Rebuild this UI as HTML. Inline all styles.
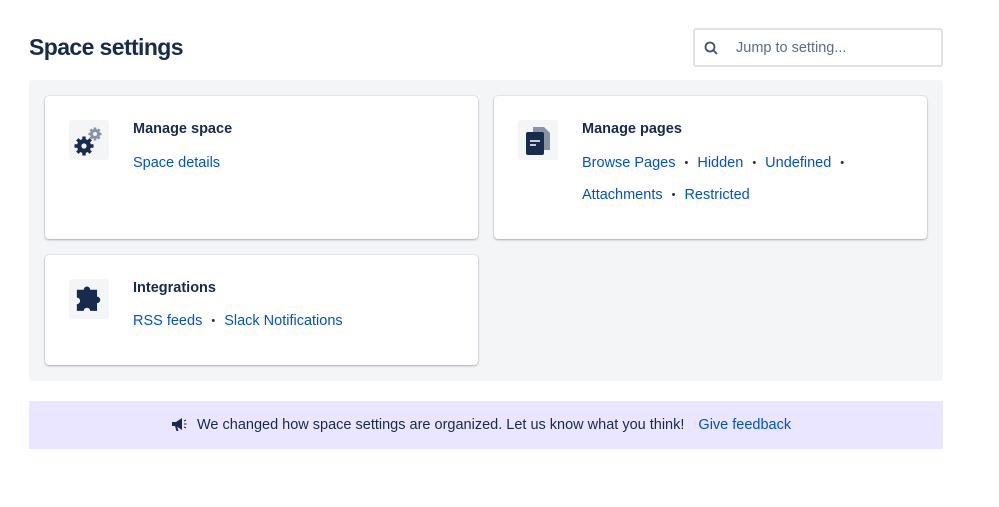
<!DOCTYPE html>
<html><head><style>
*{box-sizing:border-box;margin:0;padding:0}
body{width:999px;height:507px;background:#fff;font-family:"Liberation Sans",sans-serif;color:#172B4D;position:relative;overflow:hidden}
h1{position:absolute;left:29px;top:34px;font-size:23px;font-weight:700;color:#172B4D;letter-spacing:-0.6px}
.search{position:absolute;left:693px;top:28px;width:250px;height:39px;border:2px solid #DFE1E6;border-radius:3px;font-size:14.5px;color:#5E6C84}
.search span{position:absolute;left:41px;top:10px}
.gray{position:absolute;left:29px;top:80px;width:914px;height:301px;background:#F4F5F7;border-radius:3px}
.card{position:absolute;background:#fff;border-radius:4px;box-shadow:0 1px 2px rgba(9,30,66,.3),0 0 1px rgba(9,30,66,.3)}
.ic{position:absolute;left:24px;top:24px;width:40px;height:40px;background:#F4F5F7;border-radius:3px}
.t{position:absolute;left:88px;top:25px;font-size:14.5px;font-weight:700}
.l{position:absolute;left:88px;font-size:14.5px;color:#0052CC;white-space:nowrap}
.d{color:#172B4D;margin:0 9px;font-size:11px;vertical-align:1px}
.ban{position:absolute;left:29px;top:401px;width:914px;height:48px;background:#EAE6FF;font-size:14.5px}
.ban .m{position:absolute;left:168px;top:16px;color:#172B4D}
.ban a{color:#0052CC;text-decoration:none;margin-left:10px}
</style></head><body>
<h1>Space settings</h1>
<div class="search"><svg style="position:absolute;left:9px;top:11px" width="14" height="14" viewBox="0 0 14 14"><circle cx="6" cy="6" r="4.5" fill="none" stroke="#42526E" stroke-width="1.8"/><path d="M9.3 9.3L13 13" stroke="#42526E" stroke-width="1.8"/></svg><span>Jump to setting...</span></div>
<div class="gray"></div>
<div class="card" style="left:45px;top:96px;width:433px;height:143px">
<div class="ic"><svg width="40" height="40" viewBox="0 0 40 40"><g><circle cx="26" cy="14" r="5" fill="#8993A4"/><g stroke="#8993A4" stroke-width="2.6"><path d="M26 7.5v13M19.5 14h13M21.4 9.4l9.2 9.2M30.6 9.4l-9.2 9.2"/></g><circle cx="26" cy="14" r="2" fill="#F4F5F7"/></g><g><circle cx="15" cy="26" r="7" fill="#172B4D"/><g stroke="#172B4D" stroke-width="3.4"><path d="M15 16.5v19M5.5 26h19M8.3 19.3l13.4 13.4M21.7 19.3L8.3 32.7"/></g><circle cx="15" cy="26" r="2.6" fill="#F4F5F7"/></g></svg></div>
<div class="t">Manage space</div>
<div class="l" style="top:59px">Space details</div>
</div>
<div class="card" style="left:494px;top:96px;width:433px;height:143px">
<div class="ic"><svg width="40" height="40" viewBox="0 0 40 40"><path d="M15 7h11l6 6v17h-17z" fill="#8993A4"/><rect x="8" y="12" width="18" height="23" rx="2" fill="#172B4D"/><path d="M12 21h10M12 25h6" stroke="#fff" stroke-width="1.6"/></svg></div>
<div class="t">Manage pages</div>
<div class="l" style="top:59px">Browse Pages<span class="d">•</span>Hidden<span class="d">•</span>Undefined<span class="d">•</span></div>
<div class="l" style="top:91px">Attachments<span class="d">•</span>Restricted</div>
</div>
<div class="card" style="left:45px;top:255px;width:433px;height:110px">
<div class="ic"><svg width="40" height="40" viewBox="0 0 40 40"><path d="M7 12h7a3.3 3.3 0 1 1 6.6 0h7v7a3.3 3.3 0 1 1 0 6.6v8h-7a3.3 3.3 0 1 0-6.6 0H7v-7a3.3 3.3 0 1 0 0-6.6z" fill="#172B4D" transform="translate(1,-1) scale(0.98)"/></svg></div>
<div class="t">Integrations</div>
<div class="l" style="top:58px">RSS feeds<span class="d">•</span>Slack Notifications</div>
</div>
<div class="ban"><svg style="position:absolute;left:142px;top:16px" width="18" height="16" viewBox="0 0 18 16"><path d="M1 5h4l6-4v12L5 9H1z" fill="#172B4D"/><path d="M4 9l1.5 5h2L6 9z" fill="#172B4D"/><path d="M13 4l2-1M13 7h2.5M13 10l2 1" stroke="#172B4D" stroke-width="1"/></svg><div class="m">We changed how space settings are organized. Let us know what you think! <a>Give feedback</a></div></div>
</body></html>
